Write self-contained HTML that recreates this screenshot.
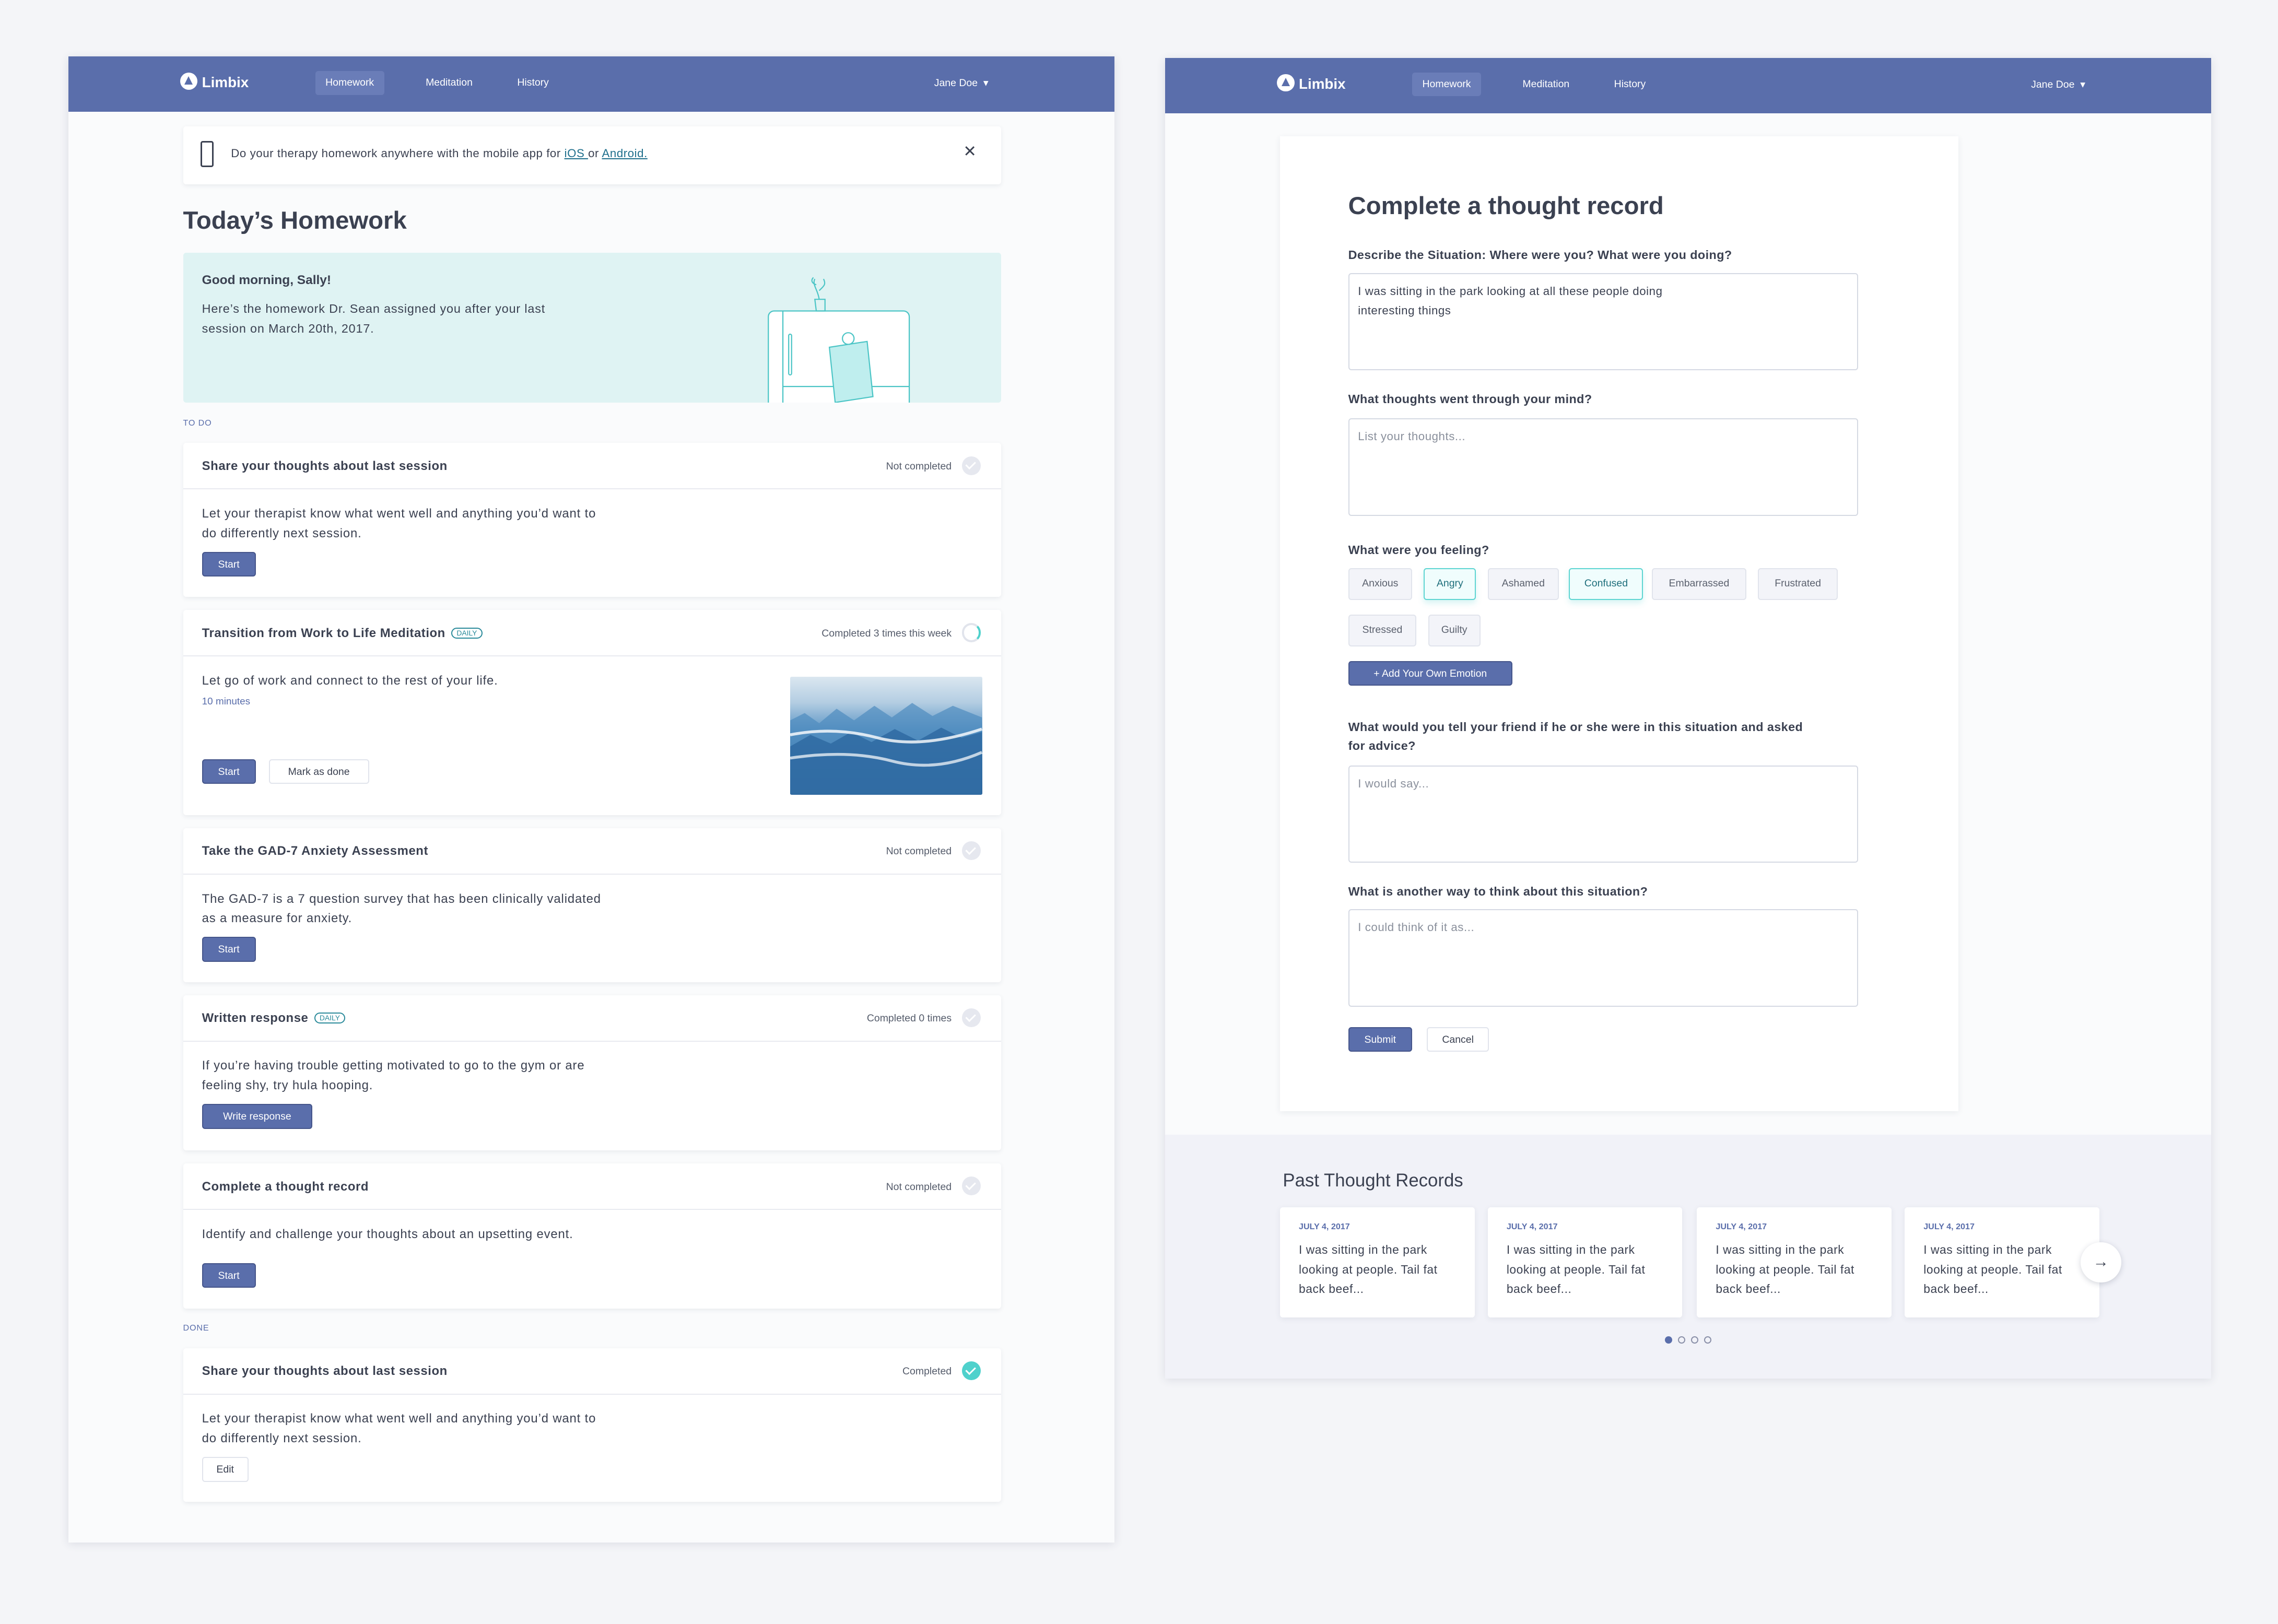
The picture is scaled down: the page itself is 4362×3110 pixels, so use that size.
<!DOCTYPE html>
<html><head><meta charset="utf-8">
<style>
*{box-sizing:border-box;margin:0;padding:0}
html,body{width:4362px;height:3110px;overflow:hidden;background:#f4f5f8}
#z{zoom:2.7819;width:1568px;height:1118px;position:relative;font-family:"Liberation Sans",sans-serif;color:#3b4151}
.abs{position:absolute}
.panel{position:absolute;background:#fafbfc;box-shadow:0 1px 6px rgba(40,50,80,.12)}
.nav{position:absolute;left:0;right:0;top:0;height:38px;background:#5a6eab}
.nav span{position:absolute;top:14px;font-size:7px;color:#fff}
.logo{position:absolute;top:11px;font-size:10px;font-weight:bold;color:#fff}
.logo i{display:inline-block;width:12px;height:12px;border-radius:50%;background:#fff;vertical-align:-2px;margin-right:3px;position:relative}
.logo i:after{content:"";position:absolute;left:3px;top:2.5px;border-left:3px solid transparent;border-right:3px solid transparent;border-bottom:6px solid #5a6eab}
.pill{background:#6a7db8;border-radius:2px;padding:4px 7px;top:10px!important}
.card{position:absolute;left:79px;width:563px;background:#fff;border-radius:2px;box-shadow:0 1px 3px rgba(40,50,80,.08)}
.ch{height:32px;border-bottom:1px solid #e8eaf0;position:relative}
.ch b{position:absolute;left:13px;top:11px;font-size:8.6px;letter-spacing:.2px;font-weight:bold;color:#3b4151}
.ch em{font-style:normal;position:absolute;right:34px;top:12px;font-size:7px;color:#555c6b}
.ck{position:absolute;right:14px;top:9px;width:13px;height:13px;border-radius:50%;background:#e6e8ef}
.ck:after{content:"";position:absolute;left:4px;top:2.5px;width:3px;height:5.5px;border:solid #fff;border-width:0 1.3px 1.3px 0;transform:rotate(45deg)}
.daily{display:inline-block;font-size:5px;color:#2a8a9a;border:1px solid #2a8a9a;border-radius:5px;padding:0 3px;line-height:6px;vertical-align:1px;margin-left:4px;font-weight:normal;letter-spacing:0}
.cb{padding:10px 13px;font-size:8.6px;letter-spacing:.3px;line-height:13.5px;color:#3b4151;white-space:nowrap}
.btn{display:inline-block;background:#5a6eab;color:#fff;font-size:7px;border-radius:2px;height:17px;line-height:16px;border:1px solid #45558a;text-align:center;letter-spacing:0}
.btn2{display:inline-block;background:#fff;color:#3b4151;font-size:7px;border-radius:2px;height:17px;line-height:16px;border:1px solid #e1e4ec;text-align:center;letter-spacing:0}
.sec{position:absolute;left:79px;font-size:5.8px;color:#5a6eab;letter-spacing:.3px}
.lbl{position:absolute;left:47px;font-size:8.4px;letter-spacing:.15px;font-weight:bold;color:#3b4151;line-height:13px;white-space:nowrap}
.ta{position:absolute;left:47px;width:351px;height:67px;border:1px solid #d5d9e3;border-radius:2px;padding:5px 6px;font-size:8px;letter-spacing:.2px;line-height:13.5px;color:#3b4151;background:#fff}
.ta.ph{color:#8a909c}
.chip{position:absolute;height:22px;line-height:20px;font-size:7px;color:#5b616e;background:#f3f4f9;border:1px solid #e1e4ec;border-radius:2px;text-align:center}
.chip.on{background:#f0fdfd;border-color:#5ed5d2;color:#1f6f7c;box-shadow:0 2px 4px rgba(94,213,210,.25)}
.pc{position:absolute;top:50px;width:134px;height:76px;background:#fff;border-radius:2px;box-shadow:0 1px 4px rgba(40,50,80,.08);padding:10px 13px}
.pc s{text-decoration:none;display:block;font-size:5.8px;color:#5a6eab;font-weight:bold;margin-bottom:6px}
.pc p{font-size:8.2px;letter-spacing:.2px;line-height:13.5px;color:#3b4151;white-space:nowrap}
</style></head><body><div id="z">

<!-- LEFT PANEL -->
<div class="panel" style="left:47px;top:39px;width:720px;height:1023px">
 <div class="nav">
  <div class="logo" style="left:77px"><i></i>Limbix</div>
  <span class="pill" style="left:170px">Homework</span>
  <span style="left:246px">Meditation</span>
  <span style="left:309px">History</span>
  <span style="left:596px">Jane Doe &nbsp;▾</span>
 </div>
 <div class="abs" style="left:79px;top:48px;width:563px;height:40px;background:#fff;box-shadow:0 1px 3px rgba(40,50,80,.08);border-radius:2px">
  <div class="abs" style="left:12px;top:10px;width:9px;height:18px;border:1.2px solid #3b4151;border-radius:1.5px"></div>
  <div class="abs" style="left:33px;top:14px;font-size:8px;letter-spacing:.2px;color:#3b4151">Do your therapy homework anywhere with the mobile app for <u style="color:#1f6f8c">iOS </u>or <u style="color:#1f6f8c">Android.</u></div>
  <div class="abs" style="left:537px;top:11px;font-size:11px;color:#3b4151">✕</div>
 </div>
 <div class="abs" style="left:79px;top:103px;font-size:17px;font-weight:bold;color:#3b4151">Today’s Homework</div>
 <div class="abs" style="left:79px;top:135px;width:563px;height:103px;background:#dff3f3;border-radius:2px;overflow:hidden">
  <div class="abs" style="left:13px;top:14px;font-size:8.8px;font-weight:bold">Good morning, Sally!</div>
  <div class="abs" style="left:13px;top:32px;font-size:8.4px;letter-spacing:.3px;line-height:13.5px;white-space:nowrap">Here’s the homework Dr. Sean assigned you after your last<br>session on March 20th, 2017.</div>
  <svg class="abs" style="left:395px;top:10px" width="110" height="95" viewBox="0 0 110 95" fill="none" stroke="#4cc5c6" stroke-width=".8">
   <rect x="8" y="30" width="97" height="80" rx="4" fill="#fff"/>
   <line x1="18" y1="30" x2="18" y2="95"/>
   <line x1="18" y1="82" x2="105" y2="82"/>
   <rect x="22" y="46" width="2" height="28" rx="1"/>
   <path d="M40 22 h7 v8 h-6z"/><path d="M43 22 C42 15 38 12 40 8 M43 16 c3-3 5-4 3-8 M41 12 c-3-1-4-3-2-5" />
   <path d="M50 55 l26 -4 l4 38 l-26 4z" fill="#bfeeee"/>
   <circle cx="63" cy="49" r="4" fill="#fff"/>
  </svg>
 </div>
 <div class="sec" style="top:249px">TO DO</div>

 <div class="card" style="top:266px;height:106px">
  <div class="ch"><b>Share your thoughts about last session</b><em>Not completed</em><div class="ck"></div></div>
  <div class="cb">Let your therapist know what went well and anything you’d want to<br>do differently next session.<div style="margin-top:6px"><span class="btn" style="width:37px">Start</span></div></div>
 </div>

 <div class="card" style="top:381px;height:141px">
  <div class="ch"><b>Transition from Work to Life Meditation<span class="daily">DAILY</span></b><em>Completed 3 times this week</em><div class="ck" style="background:#fff;border:1.5px solid #e1e4ec;border-right-color:#4fd1cc"></div></div>
  <div class="cb">Let go of work and connect to the rest of your life.<br><span style="color:#5a6eab;font-size:6.8px;letter-spacing:0">10 minutes</span>
   <div style="margin-top:33px"><span class="btn" style="width:37px">Start</span><span class="btn2" style="width:69px;margin-left:9px">Mark as done</span></div></div>
  <div class="abs" style="left:418px;top:46px;width:132px;height:81px;border-radius:1px;overflow:hidden;background:linear-gradient(180deg,#dbe7f0 0%,#b3cde2 22%,#5f97c6 45%,#3573aa 70%,#1d568e 100%)">
   <svg width="132" height="81" viewBox="0 0 132 81"><path d="M0 30 L10 25 L20 32 L32 22 L44 30 L58 20 L70 28 L84 18 L98 27 L112 20 L132 28 V81 H0Z" fill="#4f8bbf" opacity=".7"/><path d="M0 48 L14 40 L28 46 L42 38 L56 45 L72 36 L88 44 L104 35 L118 42 L132 38 V81 H0Z" fill="#2d68a0" opacity=".8"/><path d="M0 40 Q30 34 60 42 T132 36" stroke="#fff" stroke-width="2" fill="none" opacity=".8"/><path d="M0 56 Q40 50 70 58 T132 52" stroke="#fff" stroke-width="2" fill="none" opacity=".7"/></svg>
  </div>
 </div>

 <div class="card" style="top:531px;height:106px">
  <div class="ch"><b>Take the GAD-7 Anxiety Assessment</b><em>Not completed</em><div class="ck"></div></div>
  <div class="cb">The GAD-7 is a 7 question survey that has been clinically validated<br>as a measure for anxiety.<div style="margin-top:6px"><span class="btn" style="width:37px">Start</span></div></div>
 </div>

 <div class="card" style="top:646px;height:107px">
  <div class="ch"><b>Written response<span class="daily">DAILY</span></b><em>Completed 0 times</em><div class="ck"></div></div>
  <div class="cb">If you’re having trouble getting motivated to go to the gym or are<br>feeling shy, try hula hooping.<div style="margin-top:6px"><span class="btn" style="width:76px">Write response</span></div></div>
 </div>

 <div class="card" style="top:762px;height:100px">
  <div class="ch"><b>Complete a thought record</b><em>Not completed</em><div class="ck"></div></div>
  <div class="cb">Identify and challenge your thoughts about an upsetting event.<div style="margin-top:13px"><span class="btn" style="width:37px">Start</span></div></div>
 </div>

 <div class="sec" style="top:872px">DONE</div>
 <div class="card" style="top:889px;height:106px">
  <div class="ch"><b>Share your thoughts about last session</b><em>Completed</em><div class="ck" style="background:#4fd1cc"></div></div>
  <div class="cb">Let your therapist know what went well and anything you’d want to<br>do differently next session.<div style="margin-top:6px"><span class="btn2" style="width:32px">Edit</span></div></div>
 </div>
</div>

<!-- RIGHT PANEL -->
<div class="panel" style="left:802px;top:40px;width:720px;height:909px;background:#fafbfc">
 <div class="nav">
  <div class="logo" style="left:77px"><i></i>Limbix</div>
  <span class="pill" style="left:170px">Homework</span>
  <span style="left:246px">Meditation</span>
  <span style="left:309px">History</span>
  <span style="left:596px">Jane Doe &nbsp;▾</span>
 </div>
 <div class="abs" style="left:79px;top:54px;width:467px;height:671px;background:#fff;box-shadow:0 1px 4px rgba(40,50,80,.08)">
  <div class="abs" style="left:47px;top:38px;font-size:17px;font-weight:bold">Complete a thought record</div>
  <div class="lbl" style="top:75px">Describe the Situation: Where were you? What were you doing?</div>
  <div class="ta" style="top:94px">I was sitting in the park looking at all these people doing<br>interesting things</div>
  <div class="lbl" style="top:174px">What thoughts went through your mind?</div>
  <div class="ta ph" style="top:194px">List your thoughts...</div>
  <div class="lbl" style="top:278px">What were you feeling?</div>
  <div class="chip" style="left:47px;top:297px;width:44px">Anxious</div>
  <div class="chip on" style="left:99px;top:297px;width:36px">Angry</div>
  <div class="chip" style="left:143px;top:297px;width:49px">Ashamed</div>
  <div class="chip on" style="left:199px;top:297px;width:51px">Confused</div>
  <div class="chip" style="left:256px;top:297px;width:65px">Embarrassed</div>
  <div class="chip" style="left:329px;top:297px;width:55px">Frustrated</div>
  <div class="chip" style="left:47px;top:329px;width:47px">Stressed</div>
  <div class="chip" style="left:102px;top:329px;width:36px">Guilty</div>
  <div class="btn abs" style="left:47px;top:361px;width:113px">+ Add Your Own Emotion</div>
  <div class="lbl" style="top:400px">What would you tell your friend if he or she were in this situation and asked<br>for advice?</div>
  <div class="ta ph" style="top:433px">I would say...</div>
  <div class="lbl" style="top:513px">What is another way to think about this situation?</div>
  <div class="ta ph" style="top:532px">I could think of it as...</div>
  <div class="btn abs" style="left:47px;top:613px;width:44px">Submit</div>
  <div class="btn2 abs" style="left:101px;top:613px;width:43px">Cancel</div>
 </div>
 <div class="abs" style="left:0;top:741px;width:720px;height:168px;background:#f1f2f8">
  <div class="abs" style="left:81px;top:25px;font-size:12.5px;color:#3b4151">Past Thought Records</div>
  <div class="pc" style="left:79px"><s>JULY 4, 2017</s><p>I was sitting in the park<br>looking at people. Tail fat<br>back beef...</p></div>
  <div class="pc" style="left:222px"><s>JULY 4, 2017</s><p>I was sitting in the park<br>looking at people. Tail fat<br>back beef...</p></div>
  <div class="pc" style="left:366px"><s>JULY 4, 2017</s><p>I was sitting in the park<br>looking at people. Tail fat<br>back beef...</p></div>
  <div class="pc" style="left:509px;overflow:hidden"><s>JULY 4, 2017</s><p>I was sitting in the park<br>looking at people. Tail fat<br>back beef...</p></div>
  <div class="abs" style="left:630px;top:74px;width:28px;height:28px;border-radius:50%;background:#fff;box-shadow:0 1px 4px rgba(40,50,80,.2);text-align:center;line-height:27px;font-size:11px;color:#3b4151">→</div>
  <div class="abs" style="left:344px;top:139px;width:5px;height:5px;border-radius:50%;background:#5a6eab"></div>
  <div class="abs" style="left:353px;top:139px;width:5px;height:5px;border-radius:50%;border:.8px solid #8a90a8"></div>
  <div class="abs" style="left:362px;top:139px;width:5px;height:5px;border-radius:50%;border:.8px solid #8a90a8"></div>
  <div class="abs" style="left:371px;top:139px;width:5px;height:5px;border-radius:50%;border:.8px solid #8a90a8"></div>
 </div>
</div>

</div></body></html>
